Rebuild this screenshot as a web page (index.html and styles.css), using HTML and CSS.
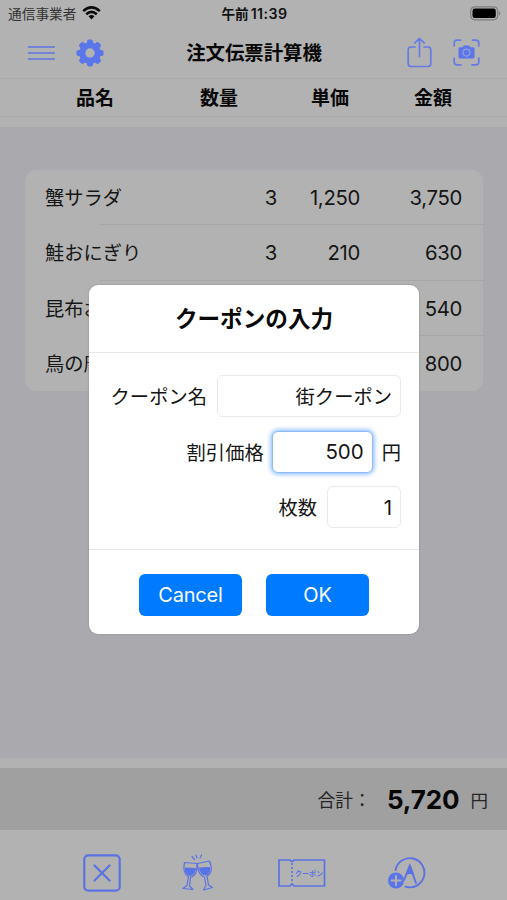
FILE: index.html
```html
<!DOCTYPE html>
<html lang="ja">
<head>
<meta charset="utf-8">
<title>注文伝票計算機</title>
<link rel="stylesheet" href="styles.css">
</head>
<body>
<div class="app">
  <div class="status">
    <div class="carrier"><span>通信事業者</span>
      <svg width="19" height="14" viewBox="0 0 19 14" fill="none" stroke="#0a0a0a" stroke-width="2.5"><path d="M1.2 5.2Q9.500-2.400 17.800 5.200M4.200 8.300Q9.500 3.500 14.800 8.300"/><path d="M6.500 10.300Q9.500 7.700 12.500 10.300L9.500 13.400Z" fill="#0a0a0a" stroke="none"/></svg>
    </div>
    <div class="clock">午前<span>11:39</span></div>
    <svg class="battery" width="31" height="15" viewBox="0 0 31 15"><rect x=".7" y=".8" width="27" height="13" rx="4" fill="none" stroke="#7d7d7d" stroke-width="1.200"/><rect x="2.500" y="2.600" width="23.300" height="9.400" rx="2.300"/><path d="M29 5Q31.500 7.300 29 9.600Z" fill="#7d7d7d"/></svg>
  </div>
  <div class="nav">
    <div class="nav-side">
      <svg class="menu" width="27" height="16" viewBox="0 0 27 16" stroke="#5f76e3" stroke-width="1.700"><path d="M0 2H27M0 8H27M0 14H27"/></svg>
      <svg width="28" height="28" viewBox="-14 -14 28 28"><g fill="#5b75ea"><g id="teeth"><rect x="-3" y="-13.600" width="6" height="27.200" rx="2"/><rect x="-13.600" y="-3" width="27.200" height="6" rx="2"/></g><use href="#teeth" transform="rotate(45)"/><circle r="10.800"/></g><circle r="4.700" fill="#b2b2b2"/></svg>
    </div>
    <h1>注文伝票計算機</h1>
    <div class="nav-side right">
      <svg width="25" height="31" viewBox="0 0 25 31" fill="none" stroke="#657be5" stroke-width="1.700" stroke-linecap="round" stroke-linejoin="round"><path d="M8 10H4Q1.200 10 1.200 13V26.500Q1.200 29.500 4.200 29.500H20.800Q23.800 29.500 23.800 26.500V13Q23.800 10 21 10H17M12.500 19.500V1.500M7.800 6L12.500 1.300L17.200 6"/></svg>
      <svg class="scan" width="27" height="27" viewBox="0 0 27 27" fill="none" stroke="#657be5" stroke-width="1.700" stroke-linecap="round"><path d="M1.200 7V4Q1.200 1.200 4 1.200H7.500M19.500 1.200H23Q25.800 1.200 25.800 4V7M25.800 19V23Q25.800 25.800 23 25.800H19M8 25.800H4Q1.200 25.800 1.200 23V19"/><path d="M7 8.300H9.500L11 6.500H16L17.500 8.300H20Q21.500 8.300 21.500 9.800V18Q21.500 19.500 20 19.500H7Q5.500 19.500 5.500 18V9.800Q5.500 8.300 7 8.300Z" fill="#5b75ea" stroke="none"/><circle cx="13.500" cy="13.600" r="3.500" stroke="#969fd3" stroke-width="1.200"/></svg>
    </div>
  </div>
  <div class="heads"><span>品名</span><span>数量</span><span>単価</span><span>金額</span></div>
  <main class="list">
    <div class="card">
      <div class="row"><span>蟹サラダ</span><span>3</span><span>1,250</span><span>3,750</span></div>
      <div class="row"><span>鮭おにぎり</span><span>3</span><span>210</span><span>630</span></div>
      <div class="row"><span>昆布お</span><span></span><span></span><span>540</span></div>
      <div class="row"><span>鳥の唐</span><span></span><span></span><span>800</span></div>
    </div>
  </main>
  <div class="total"><span class="sum">合計：</span><strong>5,720</strong><span class="yen">円</span></div>
  <div class="tools">
    <div class="tool"><svg width="38" height="38" viewBox="0 0 38 38" fill="none" stroke="#5b73e2" stroke-width="2.200" stroke-linecap="round"><rect x="1.300" y="1.300" width="35.400" height="35.400" rx="4"/><path d="M11.500 11.500L26.500 26.500M26.500 11.500L11.500 26.500"/></svg></div>
    <div class="tool"><svg width="34" height="38" viewBox="0 0 34 38" fill="none" stroke="#5b73e2" stroke-width="1.200" stroke-linecap="round" stroke-linejoin="round"><path d="M3.500 8.500L16 9.500Q16.500 22 9.500 23L8.500 32L12 35.500L2 34.500L6 31.500L7.500 22.500Q1 19 3.500 8.500ZM16.500 9.500L28.500 7Q33 18 26 22L27.500 31L31.500 33.500L22.500 36L25 31.500L23.500 23Q16.500 20.500 16.500 9.500ZM13.500 5.500L11 2.500M16 4L14.800 1M19 4L20.500 1"/><path d="M4.500 14L14.500 14.500Q13.500 20.500 9 21.500Q4 19.500 4.500 14ZM18.500 14L28.500 13.500Q29 19 25 21Q20 20.500 18.500 14Z" fill="#5672e8"/></svg></div>
    <div class="tool"><svg width="48" height="30" viewBox="0 0 48 30" fill="none" stroke="#5b73e2" stroke-width="1.700"><path d="M1 2H12Q14 5 16 2H46.500V28H16Q14 25 12 28H1Z"/><path d="M14 5V26" stroke-dasharray="2 2"/><text x="17" y="18" class="ticket">クーポン</text></svg></div>
    <div class="tool"><svg width="39" height="34" viewBox="0 0 39 34" fill="none" stroke="#5b73e2" stroke-width="1.900" stroke-linecap="round"><path d="M8.500 14A14.600 14.600 0 1 1 18.500 30.700"/><path d="M22.800 10L17 24M22.800 10L29 27"/><path d="M22.800 7L27.500 19Q22.800 17 18.300 19Z" fill="#5b73e2" stroke="none"/><circle cx="9" cy="24.500" r="8" fill="#5b75e8" stroke="none"/><path d="M4.500 24.500H13.500M9 20V29" stroke="#b2b2b2"/></svg></div>
  </div>
  <form class="dialog">
    <h2>クーポンの入力</h2>
    <div class="fields">
      <div class="field"><label>クーポン名</label><div class="box name">街クーポン</div></div>
      <div class="field"><label>割引価格</label><div class="box price">500</div><span class="unit">円</span></div>
      <div class="field"><label>枚数</label><div class="box count">1</div></div>
    </div>
    <div class="actions"><button type="button">Cancel</button><button type="button">OK</button></div>
  </form>
</div>
</body>
</html>
```
FILE: styles.css
```css
* { box-sizing: border-box; }
body { margin: 0; font-family: Inter, "Noto Sans CJK JP", sans-serif; color: #151515; }
svg { display: block; flex: none; }
.app { position: relative; width: 507px; height: 900px; background: #b2b2b2; display: flex; flex-direction: column; overflow: hidden; }
.status { height: 27px; display: grid; grid-template-columns: 1fr auto 1fr; align-items: center; padding: 0 6px 0 8px; }
.carrier { display: flex; align-items: center; gap: 6px; font-size: 13.700px; color: #333; line-height: 20px; }
.carrier svg { margin-top: -2px; }
.clock { display: flex; gap: 2px; font-size: 13.600px; font-weight: 600; line-height: 20px; color: #111; }
.clock span { font-size: 14.200px; letter-spacing: .45px; }
.battery { justify-self: end; }
.nav { height: 52px; display: grid; grid-template-columns: 1fr auto 1fr; align-items: center; padding: 0 27px 0 28px; border-bottom: 1px solid #a9a9a9; }
.nav-side { display: flex; align-items: center; gap: 21px; }
.right { justify-content: flex-end; gap: 21px; }
h1 { margin: 0; font-size: 19.400px; line-height: 28px; font-weight: 700; color: #080808; }
.heads { height: 38px; display: grid; grid-template-columns: 156px 92px 130px 76px; padding: 3px 0 0 17px; border-bottom: 1px solid #a6a6a6; align-items: center; text-align: center; font-size: 19px; line-height: 28px; font-weight: 700; color: #080808; }
.list { margin-top: 10px; height: 631px; background: #a9a9ae; padding: 43px 24px 0 25px; }
.card { height: 221px; border-radius: 11px; background: #b2b2b2; display: flex; flex-direction: column; }
.row { flex: 1; position: relative; display: grid; grid-template-columns: 179px 53px 83px 102px; padding: 1px 0 0 20px; align-items: center; text-align: right; font-size: 20.300px; letter-spacing: -.3px; line-height: 28px; }
.row span:first-child { text-align: left; font-size: 19.300px; letter-spacing: 0; white-space: nowrap; }
.row:not(:last-child)::after { content: ""; position: absolute; left: 74px; right: 0; bottom: 0; height: 1px; background: #a6a6a6; }
.total { margin-top: 10px; height: 62px; background: #a0a0a0; display: flex; align-items: center; justify-content: flex-end; padding-right: 19px; font-size: 17.800px; color: #262626; }
.sum { margin-right: 4px; }
.total strong { margin: 0 11px 0 12px; font-size: 26px; letter-spacing: -.1px; font-weight: 700; color: #080808; }
.yen { font-size: 17.500px; }
.tools { flex: 1; display: grid; grid-template-columns: 96px 96px 111px 99px; padding: 24px 0 0 54px; }
.tool { height: 38px; display: flex; align-items: center; justify-content: center; }
.ticket { font: 700 7px "Noto Sans CJK JP", sans-serif; fill: #5b73e2; stroke: none; }
.dialog { position: absolute; left: 89px; top: 285px; width: 330px; height: 349px; background: #fff; border-radius: 9px; box-shadow: 0 0 2px #888; display: flex; flex-direction: column; }
h2 { margin: 0; height: 68px; padding-top: 1px; border-bottom: 1px solid #e8e8e8; display: flex; align-items: center; justify-content: center; font-size: 22.600px; line-height: 32px; font-weight: 700; color: #080808; }
.fields { height: 197px; border-bottom: 1px solid #e1e4e8; display: flex; flex-direction: column; gap: 13.500px; padding: 22px 18px 0; }
.field { display: flex; align-items: center; justify-content: flex-end; font-size: 19.300px; }
.box { height: 42px; display: flex; align-items: center; justify-content: flex-end; border: 1px solid #eaeaea; border-radius: 6px; margin-left: 10px; padding-right: 8px; background: #fff; }
.name { width: 184px; }
.price { width: 101px; font-size: 20.500px; border-color: #8cbcf8; box-shadow: 0 0 5px 1px #7ab4fc; margin-left: 8px; }
.count { width: 74px; font-size: 20.500px; }
.unit { margin-left: 9px; }
.actions { flex: 1; display: flex; justify-content: center; gap: 24px; padding-top: 24px; }
button { width: 103px; height: 42px; border: 0; border-radius: 6px; background: #007aff; color: #fff; font-family: inherit; font-size: 20px; letter-spacing: -.2px; padding: 0; }
```
